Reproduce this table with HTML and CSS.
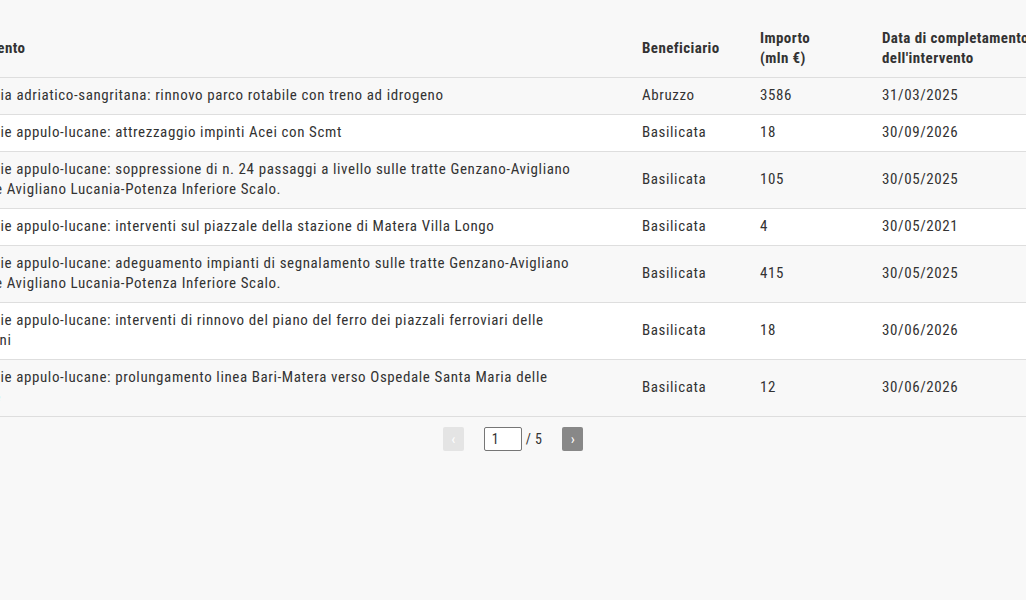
FILE: index.html
```html
<!DOCTYPE html>
<html lang="it">
<head>
<meta charset="utf-8">
<title>Interventi</title>
<link rel="stylesheet" href="styles.css">
</head>
<body>
<div class="page">
  <div class="table-scroll">
    <table class="data-table">
      <colgroup>
        <col class="c-int">
        <col class="c-ben">
        <col class="c-imp">
        <col class="c-data">
      </colgroup>
      <thead>
        <tr>
          <th>Intervento</th>
          <th>Beneficiario</th>
          <th>Importo<br>(mln €)</th>
          <th>Data di completamento<br>dell'intervento</th>
        </tr>
      </thead>
      <tbody>
        <tr>
          <td>Ferrovia adriatico-sangritana: rinnovo parco rotabile con treno ad idrogeno</td>
          <td>Abruzzo</td><td>3586</td><td>31/03/2025</td>
        </tr>
        <tr>
          <td>Ferrovie appulo-lucane: attrezzaggio impinti Acei con Scmt</td>
          <td>Basilicata</td><td>18</td><td>30/09/2026</td>
        </tr>
        <tr>
          <td>Ferrovie appulo-lucane: soppressione di n. 24 passaggi a livello sulle tratte Genzano-Avigliano<br>Città e Avigliano Lucania-Potenza Inferiore Scalo.</td>
          <td>Basilicata</td><td>105</td><td>30/05/2025</td>
        </tr>
        <tr>
          <td>Ferrovie appulo-lucane: interventi sul piazzale della stazione di Matera Villa Longo</td>
          <td>Basilicata</td><td>4</td><td>30/05/2021</td>
        </tr>
        <tr>
          <td>Ferrovie appulo-lucane: adeguamento impianti di segnalamento sulle tratte Genzano-Avigliano<br>Città e Avigliano Lucania-Potenza Inferiore Scalo.</td>
          <td>Basilicata</td><td>415</td><td>30/05/2025</td>
        </tr>
        <tr>
          <td>Ferrovie appulo-lucane: interventi di rinnovo del piano del ferro dei piazzali ferroviari delle<br>stazioni</td>
          <td>Basilicata</td><td>18</td><td>30/06/2026</td>
        </tr>
        <tr>
          <td>Ferrovie appulo-lucane: prolungamento linea Bari-Matera verso Ospedale Santa Maria delle<br>Grazie</td>
          <td>Basilicata</td><td>12</td><td>30/06/2026</td>
        </tr>
      </tbody>
    </table>
  </div>
  <nav class="pager">
    <button class="pager-btn is-disabled" type="button">‹</button>
    <div class="pager-pos">
      <input class="pager-input" type="text" value="1">
      <span class="pager-total">/ 5</span>
    </div>
    <button class="pager-btn" type="button">›</button>
  </nav>
</div>
</body>
</html>
```
FILE: styles.css
```css
html, body {
  margin: 0;
  padding: 0;
  background: #f8f8f8;
}

body {
  font-family: "Roboto Condensed", Roboto, "Liberation Sans", sans-serif;
  font-stretch: condensed;
  font-size: 15px;
  color: #333;
}

.page {
  padding-top: 20px;
}

.table-scroll {
  overflow: hidden;
  width: 100%;
}

.data-table {
  border-collapse: collapse;
  table-layout: fixed;
  width: 1200px;
  margin-left: -50px;
}

.c-int { width: 682px; }
.c-ben { width: 118px; }
.c-imp { width: 122px; }
.c-data { width: 278px; }

.data-table th,
.data-table td {
  text-align: left;
  vertical-align: middle;
  line-height: 20px;
  padding: 7px 10px 9px;
  border-bottom: 1px solid #dedede;
  white-space: nowrap;
}

.data-table td {
  letter-spacing: 0.6px;
}

.data-table th {
  font-weight: 700;
  letter-spacing: 0.4px;
  padding-top: 8px;
  padding-bottom: 9px;
}

.data-table tbody tr:nth-child(odd) {
  background: #f8f8f8;
}

.data-table tbody tr:nth-child(even) {
  background: #ffffff;
}

.pager {
  display: flex;
  justify-content: center;
  align-items: center;
  gap: 20px;
  margin-top: 10px;
}

.pager-btn {
  width: 21px;
  height: 24px;
  padding: 0;
  border: none;
  border-radius: 2px;
  background: #888;
  color: #fff;
  font-family: inherit;
  font-size: 15px;
  line-height: 24px;
}

.pager-btn.is-disabled {
  background: #e4e4e4;
  color: #fff;
}

.pager-pos {
  display: flex;
  align-items: center;
  gap: 4px;
}

.pager-input {
  box-sizing: border-box;
  width: 38px;
  height: 24px;
  padding: 0 7px;
  border: 1px solid #767676;
  border-radius: 2px;
  background: #fff;
  font-family: inherit;
  font-size: 14px;
  letter-spacing: 0.4px;
  color: #333;
}

.pager-total {
  font-size: 14px;
  letter-spacing: 0.4px;
  color: #333;
}
```
